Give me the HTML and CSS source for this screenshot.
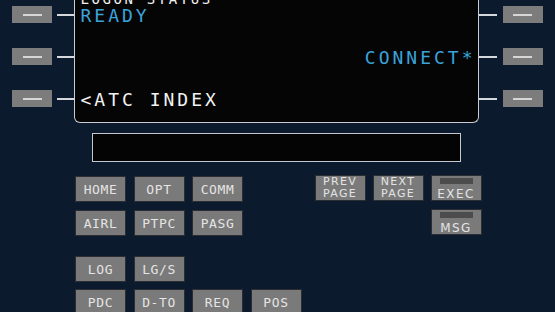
FILE: index.html
```html
<!DOCTYPE html>
<html>
<head>
    <meta charset="UTF-8">
    <meta name="viewport" content="width=device-width, initial-scale=1.0">
    <title>CDU - ATC Logon</title>
    <link rel="stylesheet" href="styles.css">
</head>
<body>

<div class="cdu">
    <div class="top">
        <!-- left line select keys -->
        <div class="lsk-col lsk-left">
            <div class="lsk"><span class="lsk-btn"><i></i></span><span class="lsk-line"></span></div>
            <div class="lsk"><span class="lsk-btn"><i></i></span><span class="lsk-line"></span></div>
            <div class="lsk"><span class="lsk-btn"><i></i></span><span class="lsk-line"></span></div>
        </div>

        <div class="screen">
            <div class="row">
                <div class="label">LOGON STATUS</div>
                <div class="data cyan">READY</div>
            </div>
            <div class="row">
                <div class="label"></div>
                <div class="data cyan right">CONNECT*</div>
            </div>
            <div class="row">
                <div class="label"></div>
                <div class="data">&lt;ATC INDEX</div>
            </div>
        </div>

        <!-- right line select keys -->
        <div class="lsk-col lsk-right">
            <div class="lsk"><span class="lsk-line"></span><span class="lsk-btn"><i></i></span></div>
            <div class="lsk"><span class="lsk-line"></span><span class="lsk-btn"><i></i></span></div>
            <div class="lsk"><span class="lsk-line"></span><span class="lsk-btn"><i></i></span></div>
        </div>
    </div>

    <div class="scratchpad"></div>

    <div class="keys">
        <div class="key-left">
            <div class="key-grid">
                <button class="key">HOME</button>
                <button class="key">OPT</button>
                <button class="key">COMM</button>
                <span></span>
                <button class="key">AIRL</button>
                <button class="key">PTPC</button>
                <button class="key">PASG</button>
                <span></span>
            </div>
            <div class="key-grid second">
                <button class="key">LOG</button>
                <button class="key">LG/S</button>
                <span></span>
                <span></span>
                <button class="key">PDC</button>
                <button class="key">D-TO</button>
                <button class="key">REQ</button>
                <button class="key">POS</button>
            </div>
        </div>

        <div class="key-right">
            <button class="key small">PREV<br>PAGE</button>
            <button class="key small">NEXT<br>PAGE</button>
            <button class="key annun">EXEC</button>
            <span></span>
            <span></span>
            <button class="key annun">MSG</button>
        </div>
    </div>
</div>

</body>
</html>
```

FILE: styles.css
```css
body {
    margin: 0;
    padding: 0;
    background-color: #0b1a2d;
    font-family: "DejaVu Sans Mono", monospace;
    overflow: hidden;
}

.cdu {
    width: 555px;
    height: 312px;
}

.top {
    display: flex;
    align-items: flex-start;
}

/* Line select keys */
.lsk-col {
    display: flex;
    flex-direction: column;
    gap: 25px;
    padding-top: 6px;
}

.lsk-left {
    width: 74px;
}

.lsk-right {
    width: 64px;
}

.lsk {
    display: flex;
    align-items: center;
    height: 17px;
}

.lsk-left .lsk-btn {
    margin-left: 12px;
    margin-right: 5px;
}

.lsk-right .lsk-btn {
    margin-left: 6px;
}

.lsk-btn {
    width: 40px;
    height: 17px;
    background-color: #7c7c7c;
    display: flex;
    align-items: center;
    justify-content: center;
}

.lsk-btn i {
    width: 19px;
    height: 2px;
    background-color: #d6d6d6;
}

.lsk-line {
    width: 17px;
    height: 2px;
    background-color: #d4d8dc;
}

.lsk-right .lsk-line {
    width: 18px;
}

/* Display */
.screen {
    width: 395px;
    margin-top: -24px;
    padding: 16px 2px 4px 5.5px;
    background-color: #050505;
    border: 1.5px solid #c9cdd3;
    border-top: none;
    border-radius: 0 0 6px 6px;
}

.row {
    margin-bottom: 10px;
}

.label {
    height: 15px;
    font-size: 14px;
    line-height: 15px;
    letter-spacing: 2.6px;
    color: #f2f2f2;
}

.data {
    height: 17px;
    font-size: 18px;
    line-height: 17px;
    letter-spacing: 3px;
    color: #f2f2f2;
    white-space: nowrap;
}

.cyan {
    color: #3ba3dc;
}

.right {
    text-align: right;
}

.scratchpad {
    width: 367px;
    height: 27px;
    margin: 10px 0 0 92px;
    background-color: #040404;
    border: 1.5px solid #c4c8d0;
}

/* Keyboard */
.keys {
    display: flex;
    align-items: flex-start;
    margin-top: 14px;
    padding-left: 75px;
}

.key-grid {
    display: grid;
    grid-template-columns: repeat(4, 51px);
    grid-auto-rows: 26px;
    column-gap: 7.5px;
    row-gap: 8px;
}

.key-grid.second {
    margin-top: 20px;
    row-gap: 7px;
}

.key-right {
    display: grid;
    grid-template-columns: repeat(3, 51px);
    grid-auto-rows: 26px;
    column-gap: 7px;
    row-gap: 8px;
    margin-left: 13px;
    margin-top: -1px;
}

.key {
    margin: 0;
    padding: 0;
    background-color: #7a7a7a;
    border: 1px solid #2a2d31;
    color: #e4e4e4;
    font-family: "DejaVu Sans Mono", monospace;
    font-size: 13px;
    letter-spacing: 0.6px;
    line-height: 26px;
    text-align: center;
}

.key.small {
    font-family: "DejaVu Sans", sans-serif;
    font-size: 11px;
    line-height: 12px;
    letter-spacing: 1.3px;
    padding-bottom: 1px;
}

.key.annun {
    font-family: "DejaVu Sans", sans-serif;
    font-size: 12px;
    letter-spacing: 1.4px;
    line-height: 12px;
    padding-top: 12px;
    position: relative;
}

.key.annun::before {
    content: "";
    position: absolute;
    left: 8px;
    right: 8px;
    top: 2px;
    height: 6px;
    background-color: #4c4c4c;
}
```
